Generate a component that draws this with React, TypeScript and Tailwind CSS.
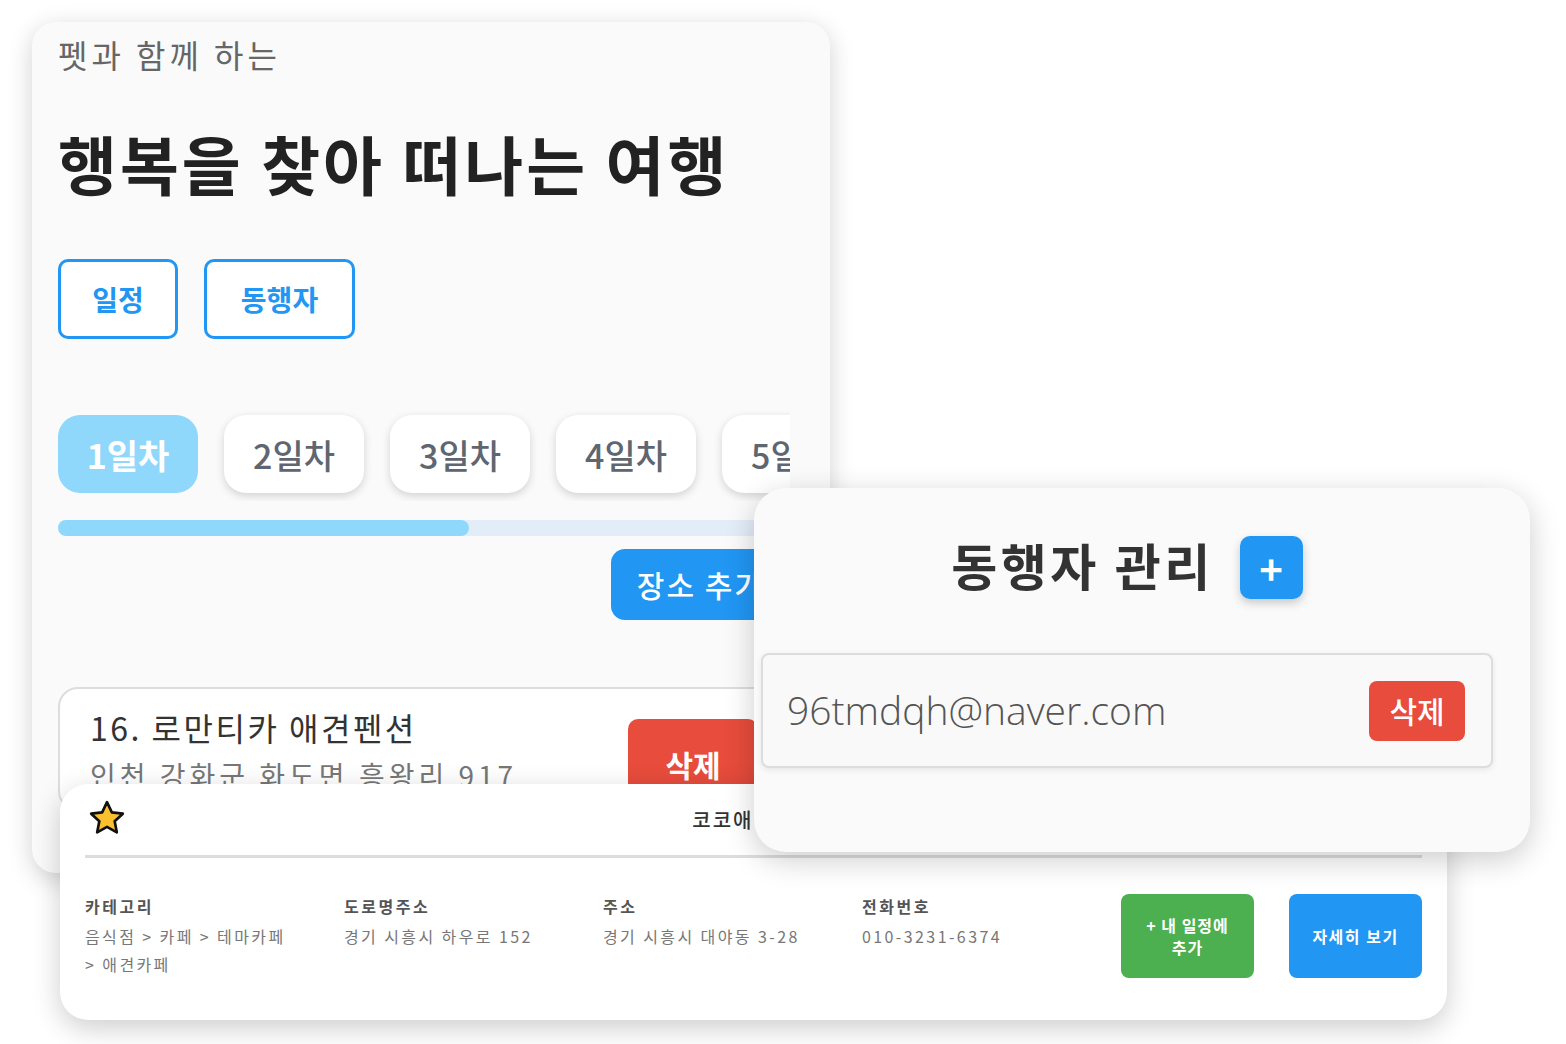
import React from 'react';

const kr = { fontFamily: '"Noto Sans CJK KR", "Noto Sans", sans-serif' };

function Star() {
  return (
    <svg width="40" height="40" viewBox="0 0 24 24">
      <path
        d="M12 2.5l2.9 6.1 6.6.8-4.9 4.6 1.3 6.6L12 17.3l-5.9 3.3 1.3-6.6-4.9-4.6 6.6-.8z"
        fill="#fbc02d"
        stroke="#111"
        strokeWidth="1.6"
        strokeLinejoin="round"
      />
    </svg>
  );
}

function TripCard() {
  const days = ['1일차', '2일차', '3일차', '4일차', '5일차'];
  return (
    <div className="absolute left-[32px] top-[22px] z-0 h-[851px] w-[798px] overflow-hidden rounded-[24px] bg-[#fafafa] px-[26px] shadow-[0_6px_24px_rgba(0,0,0,0.18)]">
      <p className="mt-[12px] text-[32px] leading-[40px] tracking-[4px] text-[#666]">펫과 함께 하는</p>
      <h1 className="mt-[48px] text-[64px] font-bold leading-[80px] tracking-[3px] text-[#222]">
        행복을 찾아 떠나는 여행
      </h1>

      <div className="mt-[57px] flex gap-[26px]">
        <button className="h-[80px] w-[120px] rounded-[10px] border-[3px] border-[#2196f3] bg-white text-[28px] font-bold text-[#2196f3]">
          일정
        </button>
        <button className="h-[80px] w-[151px] rounded-[10px] border-[3px] border-[#2196f3] bg-white text-[28px] font-bold text-[#2196f3]">
          동행자
        </button>
      </div>

      <div className="mt-[68px] flex w-[732px] gap-[26px] overflow-hidden py-[8px]">
        {days.map((d, i) => (
          <div
            key={d}
            className={
              i === 0
                ? 'flex h-[78px] w-[140px] shrink-0 items-center justify-center rounded-[22px] bg-[#90d8fb] text-[34px] font-bold text-white'
                : 'flex h-[78px] w-[140px] shrink-0 items-center justify-center rounded-[22px] bg-white text-[34px] font-medium text-[#5f6670] shadow-[0_3px_8px_rgba(0,0,0,0.16)]'
            }
          >
            {d}
          </div>
        ))}
      </div>

      <div className="mt-[19px] h-[16px] w-[732px] rounded-full bg-[#e3edf8]">
        <div className="h-full w-[411px] rounded-full bg-[#90d8fb]" />
      </div>

      <div className="mt-[13px] flex w-[732px] justify-end">
        <button className="h-[71px] rounded-[14px] bg-[#2196f3] px-[26px] text-[30px] font-medium tracking-[2px] text-white">
          장소 추가
        </button>
      </div>

      <div className="mt-[67px] flex w-[732px] justify-between rounded-[20px] border-2 border-[#ddd] bg-white pl-[30px] pr-[30px] pt-[16px]">
        <div>
          <p className="text-[32px] leading-[44px] tracking-[2.5px] text-[#333]">16. 로만티카 애견펜션</p>
          <p className="mt-[6px] text-[28px] leading-[40px] tracking-[4px] text-[#777]">인천 강화군 화도면 흥왕리 917</p>
        </div>
        <button className="mt-[14px] h-[90px] w-[130px] rounded-[10px] bg-[#e74c3c] text-[30px] font-bold text-white">
          삭제
        </button>
      </div>
    </div>
  );
}

function PlaceCard() {
  const cols = [
    { label: '카테고리', value: '음식점 > 카페 > 테마카페 >\u00a0애견카페' },
    { label: '도로명주소', value: '경기 시흥시 하우로 152' },
    { label: '주소', value: '경기 시흥시 대야동 3-28' },
    { label: '전화번호', value: '010-3231-6374' },
  ];
  return (
    <div className="absolute left-[60px] top-[784px] z-10 h-[236px] w-[1387px] rounded-[28px] bg-white px-[25px] shadow-[0_8px_28px_rgba(0,0,0,0.2)]">
      <div className="relative flex h-[71px] items-center">
        <div className="ml-[2px] mt-[-3px]">
          <Star />
        </div>
        <p className="absolute left-0 right-0 text-center text-[20px] font-medium tracking-[2px] text-[#333]">코코애견카페</p>
      </div>
      <div className="h-[3px] bg-[#ddd]" />
      <div className="mt-[36px] flex items-start">
        {cols.map((c) => (
          <div key={c.label} className="w-[259px] shrink-0 pr-[30px]">
            <p className="text-[16px] font-bold leading-[24px] tracking-[2.5px] text-[#555]">{c.label}</p>
            <p className="mt-[4px] text-[16px] leading-[28px] tracking-[2.4px] text-[#777]">{c.value}</p>
          </div>
        ))}
        <div className="ml-auto flex gap-[35px]">
          <button className="h-[84px] w-[133px] rounded-[8px] bg-[#4caf50] text-[16px] font-bold leading-[22px] tracking-[1px] text-white">
            + 내 일정에
            <br />
            추가
          </button>
          <button className="h-[84px] w-[133px] rounded-[8px] bg-[#2196f3] text-[16px] font-bold tracking-[1.5px] text-white">
            자세히 보기
          </button>
        </div>
      </div>
    </div>
  );
}

function CompanionCard() {
  return (
    <div className="absolute left-[754px] top-[488px] z-20 h-[364px] w-[776px] rounded-[32px] bg-[#fafafa] shadow-[0_8px_30px_rgba(0,0,0,0.2)]">
      <div className="ml-[7px] w-[732px]">
        <div className="flex items-center justify-center gap-[26px] pt-[48px]">
          <h2 className="mt-[-8px] text-[50px] font-bold leading-[60px] tracking-[3.5px] text-[#333]">동행자 관리</h2>
          <button className="flex h-[63px] w-[63px] items-center justify-center rounded-[10px] bg-[#2196f3] text-[40px] font-bold leading-none text-white shadow-[0_4px_10px_rgba(0,0,0,0.2)]">
            +
          </button>
        </div>
        <div className="mt-[54px] flex h-[115px] items-center justify-between rounded-[8px] border-2 border-[#ddd] bg-[#f9f9f9] pl-[24px] pr-[26px] shadow-[0_2px_6px_rgba(0,0,0,0.08)]">
          <span className="text-[39px] font-light text-[#555]" style={{ fontFamily: '"Open Sans", sans-serif' }}>
            96tmdqh@naver.com
          </span>
          <button className="h-[60px] w-[96px] rounded-[8px] bg-[#e74c3c] text-[30px] font-medium text-white">
            삭제
          </button>
        </div>
      </div>
    </div>
  );
}

export default function App() {
  return (
    <div className="relative h-[1044px] w-[1566px] overflow-hidden bg-white" style={kr}>
      <TripCard />
      <PlaceCard />
      <CompanionCard />
    </div>
  );
}
